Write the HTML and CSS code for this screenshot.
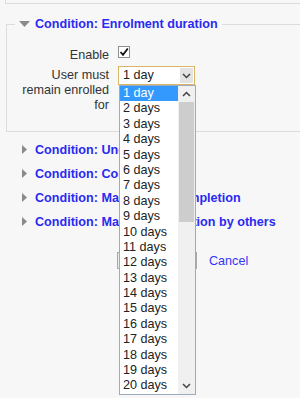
FILE: index.html
```html
<!DOCTYPE html>
<html>
<head>
<meta charset="utf-8">
<link rel="stylesheet" href="styles.css">
</head>
<body>
<div class="prev"></div>
<fieldset class="group">
  <legend class="group-title"><svg class="ico-down" width="11" height="6" viewBox="0 0 11 6"><polygon points="0,0 11,0 5.5,6" fill="#8a8a8a"/></svg>Condition: Enrolment duration</legend>
  <div class="field">
    <label class="field-label">Enable</label>
    <div class="field-control"><span class="checkbox"><svg width="10" height="10" viewBox="0 0 10 10"><polyline points="1.5,5 4,7.8 8.8,1.5" fill="none" stroke="#111" stroke-width="1.8"/></svg></span></div>
  </div>
  <div class="field field-duration">
    <label class="field-label">User must remain enrolled for</label>
    <div class="field-control">
      <div class="select">
        <span class="select-value">1 day</span>
        <span class="select-btn"><svg width="9" height="6" viewBox="0 0 9 6"><polyline points="1,1 4.5,4.5 8,1" fill="none" stroke="#444" stroke-width="1.5"/></svg></span>
        <div class="dropdown">
          <div class="options">
            <div class="option selected">1 day</div>
            <div class="option">2 days</div>
            <div class="option">3 days</div>
            <div class="option">4 days</div>
            <div class="option">5 days</div>
            <div class="option">6 days</div>
            <div class="option">7 days</div>
            <div class="option">8 days</div>
            <div class="option">9 days</div>
            <div class="option">10 days</div>
            <div class="option">11 days</div>
            <div class="option">12 days</div>
            <div class="option">13 days</div>
            <div class="option">14 days</div>
            <div class="option">15 days</div>
            <div class="option">16 days</div>
            <div class="option">17 days</div>
            <div class="option">18 days</div>
            <div class="option">19 days</div>
            <div class="option">20 days</div>
          </div>
          <div class="scrollbar">
            <div class="sb-btn"><svg width="9" height="6" viewBox="0 0 9 6"><polyline points="1,5 4.5,1.5 8,5" fill="none" stroke="#444" stroke-width="1.5"/></svg></div>
            <div class="sb-thumb"></div>
            <div class="sb-track"></div>
            <div class="sb-btn"><svg width="9" height="6" viewBox="0 0 9 6"><polyline points="1,1 4.5,4.5 8,1" fill="none" stroke="#444" stroke-width="1.5"/></svg></div>
          </div>
        </div>
      </div>
    </div>
  </div>
</fieldset>
<div class="collapsed-list">
  <div class="collapsed"><svg class="ico-right" width="11" height="9" viewBox="0 0 11 9"><polygon points="3,0 8,4.5 3,9" fill="#8a8a8a"/></svg>Condition: Unenrolment</div>
  <div class="collapsed"><svg class="ico-right" width="11" height="9" viewBox="0 0 11 9"><polygon points="3,0 8,4.5 3,9" fill="#8a8a8a"/></svg>Condition: Course grade</div>
  <div class="collapsed"><svg class="ico-right" width="11" height="9" viewBox="0 0 11 9"><polygon points="3,0 8,4.5 3,9" fill="#8a8a8a"/></svg>Condition: Manual self completion</div>
  <div class="collapsed"><svg class="ico-right" width="11" height="9" viewBox="0 0 11 9"><polygon points="3,0 8,4.5 3,9" fill="#8a8a8a"/></svg>Condition: Manual completion by others</div>
</div>
<div class="actions">
  <button class="btn">Save changes</button>
  <a class="cancel" href="#">Cancel</a>
</div>
</body>
</html>
```
FILE: styles.css
```css
html, body {
  margin: 0;
  padding: 0;
}
body {
  width: 300px;
  height: 398px;
  overflow: hidden;
  background: #f7f7f7;
  font-family: "Liberation Sans", Arial, sans-serif;
  font-size: 12.6px;
  color: #333;
}
.prev {
  margin-left: 5px;
  height: 3px;
  border-left: 1px solid #dcdcdc;
  border-bottom: 1px solid #dcdcdc;
}
.group {
  margin: 13px 0 0 6px;
  padding: 16px 0 18px 0;
  border: 1px solid #dcdcdc;
  border-right: 0;
  min-width: 0;
}
.group-title {
  margin-left: 8px;
  padding: 0 4px;
  line-height: 15px;
  font-weight: bold;
  color: #2a2af2;
}
.ico-down {
  display: inline-block;
  vertical-align: middle;
  margin: -2px 5px 0 0;
}
.field {
  display: grid;
  grid-template-columns: 102px auto;
  column-gap: 9px;
  line-height: 15px;
}
.field-duration {
  margin-top: 5px;
}
.field-label {
  justify-self: end;
  max-width: 88px;
  text-align: right;
  color: #333;
}
.field-control {
  display: flex;
  align-items: flex-start;
}
.checkbox {
  box-sizing: border-box;
  width: 12px;
  height: 12px;
  margin-top: -2px;
  border: 1px solid #8e8e8e;
  background: #fff;
  display: flex;
  align-items: center;
  justify-content: center;
}
.select {
  position: relative;
  box-sizing: border-box;
  width: 77px;
  height: 19px;
  margin-top: -2px;
  padding-left: 4px;
  border: 1px solid #dab767;
  background: #fff;
  display: flex;
  align-items: center;
  justify-content: space-between;
  color: #222;
}
.select-btn {
  width: 13px;
  height: 15px;
  margin-right: 1px;
  background: #e3e3e3;
  display: flex;
  align-items: center;
  justify-content: center;
}
.dropdown {
  position: absolute;
  left: 0;
  top: calc(100% + 1px);
  z-index: 10;
  box-sizing: border-box;
  width: 77px;
  height: 310px;
  border: 1px solid #9cabc0;
  background: #fff;
  display: flex;
}
.options {
  width: 58px;
}
.option {
  height: 15.4px;
  line-height: 15.4px;
  padding-left: 3px;
  color: #222;
  white-space: nowrap;
}
.option.selected {
  background: #3399ff;
  color: #fff;
}
.scrollbar {
  width: 17px;
  background: #f0f0f0;
  display: flex;
  flex-direction: column;
}
.sb-btn {
  height: 16px;
  display: flex;
  align-items: center;
  justify-content: center;
}
.sb-thumb {
  height: 120px;
  margin: 0 1px;
  background: #cdcdcd;
}
.sb-track {
  flex: 1;
}
.collapsed-list {
  margin-top: 6px;
}
.collapsed {
  height: 24px;
  line-height: 24px;
  padding-left: 19px;
  font-weight: bold;
  color: #2a2af2;
  white-space: nowrap;
}
.ico-right {
  display: inline-block;
  vertical-align: middle;
  margin: -2px 5px 0 0;
}
.actions {
  margin-top: 18px;
  padding-left: 117px;
  display: flex;
  align-items: center;
  gap: 12px;
}
.btn {
  box-sizing: border-box;
  width: 80px;
  height: 17px;
  padding: 0;
  border: 1px solid #a8a8a8;
  background: #ececec;
  font-family: inherit;
  font-size: 12px;
  color: #222;
  overflow: hidden;
}
.cancel {
  color: #3535f5;
  text-decoration: none;
}
```
